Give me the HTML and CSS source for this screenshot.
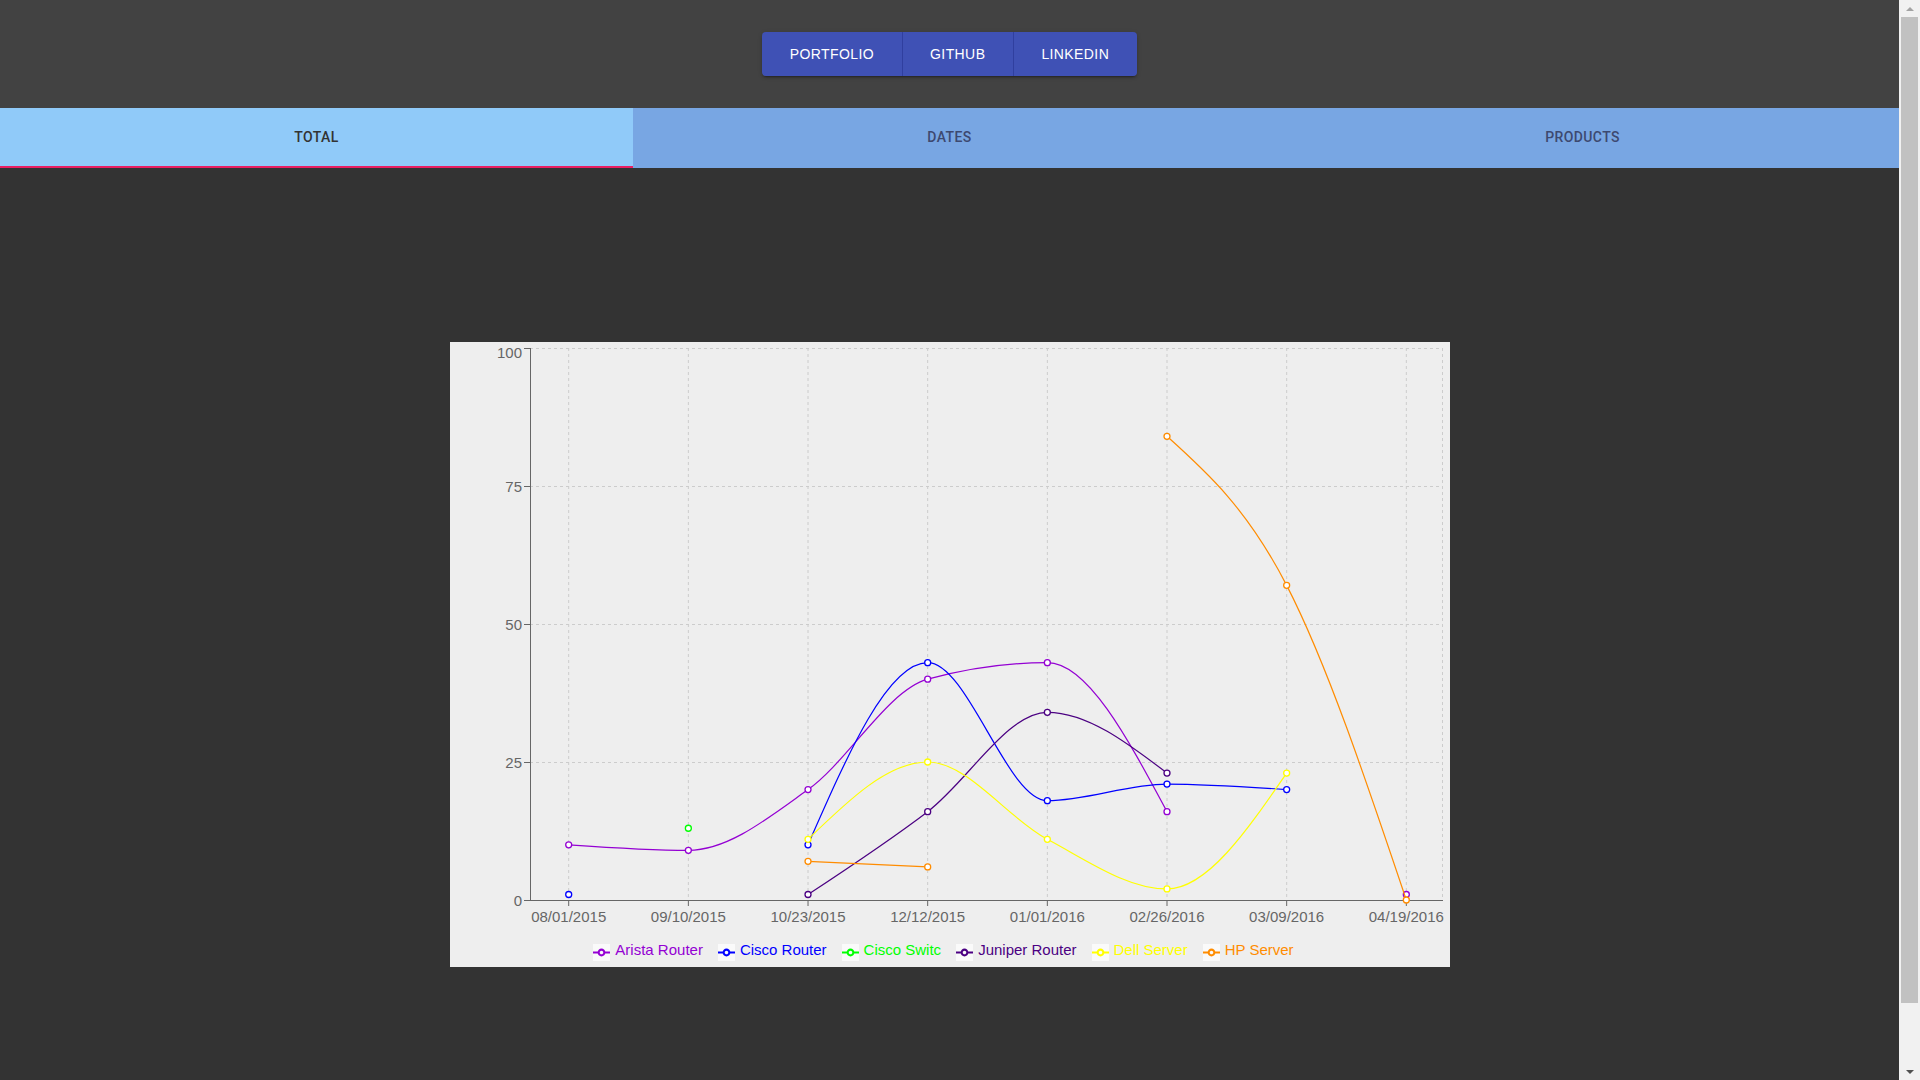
FILE: index.html
```html
<!DOCTYPE html>
<html lang="en">
<head>
<meta charset="utf-8">
<title>Sales Dashboard</title>
<link rel="stylesheet" href="styles.css">
</head>
<body>
<div class="page">
  <div class="content">
    <header class="top-bar">
      <nav class="btn-group">
        <a class="btn" href="#">PORTFOLIO</a>
        <a class="btn" href="#">GITHUB</a>
        <a class="btn" href="#">LINKEDIN</a>
      </nav>
    </header>
    <div class="tabs">
      <div class="tab active">TOTAL</div>
      <div class="tab">DATES</div>
      <div class="tab">PRODUCTS</div>
    </div>
    <main class="main">
      <div class="chart-card">
        <svg class="chart" width="1000" height="598" viewBox="0 0 1000 598">
          <g class="grid">
            <line x1="80" y1="6.5" x2="993" y2="6.5"/>
            <line x1="80" y1="144.5" x2="993" y2="144.5"/>
            <line x1="80" y1="282.5" x2="993" y2="282.5"/>
            <line x1="80" y1="420.5" x2="993" y2="420.5"/>
            <line x1="118.7" y1="6" x2="118.7" y2="558"/>
            <line x1="238.36" y1="6" x2="238.36" y2="558"/>
            <line x1="358.02" y1="6" x2="358.02" y2="558"/>
            <line x1="477.68" y1="6" x2="477.68" y2="558"/>
            <line x1="597.34" y1="6" x2="597.34" y2="558"/>
            <line x1="717" y1="6" x2="717" y2="558"/>
            <line x1="836.66" y1="6" x2="836.66" y2="558"/>
            <line x1="956.32" y1="6" x2="956.32" y2="558"/>
            <line x1="992.5" y1="6" x2="992.5" y2="558"/>
          </g>
          <g class="axis">
            <line x1="80.5" y1="6" x2="80.5" y2="558.5"/>
            <line x1="74" y1="6.5" x2="80" y2="6.5"/>
            <line x1="74" y1="144.5" x2="80" y2="144.5"/>
            <line x1="74" y1="282.5" x2="80" y2="282.5"/>
            <line x1="74" y1="420.5" x2="80" y2="420.5"/>
            <line x1="74" y1="558.5" x2="80" y2="558.5"/>
            <line x1="80" y1="558.5" x2="993" y2="558.5"/>
            <line x1="118.7" y1="558" x2="118.7" y2="564"/>
            <line x1="238.36" y1="558" x2="238.36" y2="564"/>
            <line x1="358.02" y1="558" x2="358.02" y2="564"/>
            <line x1="477.68" y1="558" x2="477.68" y2="564"/>
            <line x1="597.34" y1="558" x2="597.34" y2="564"/>
            <line x1="717" y1="558" x2="717" y2="564"/>
            <line x1="836.66" y1="558" x2="836.66" y2="564"/>
            <line x1="956.32" y1="558" x2="956.32" y2="564"/>
          </g>
          <g class="ylabels">
            <text x="72" y="15.5">100</text>
            <text x="72" y="149.5">75</text>
            <text x="72" y="287.5">50</text>
            <text x="72" y="425.5">25</text>
            <text x="72" y="564">0</text>
          </g>
          <g class="xlabels">
            <text x="118.7" y="580">08/01/2015</text>
            <text x="238.36" y="580">09/10/2015</text>
            <text x="358.02" y="580">10/23/2015</text>
            <text x="477.68" y="580">12/12/2015</text>
            <text x="597.34" y="580">01/01/2016</text>
            <text x="717" y="580">02/26/2016</text>
            <text x="836.66" y="580">03/09/2016</text>
            <text x="956.32" y="580">04/19/2016</text>
          </g>

          <g class="series s-arista">
            <path d="M118.7,502.8 C158.59,505.56 198.47,508.32 238.36,508.32 C278.25,508.32 318.13,476.12 358.02,447.6 C397.91,419.08 437.79,348.24 477.68,337.2 C517.57,326.16 557.45,320.64 597.34,320.64 C637.23,320.64 677.11,395.16 717,469.68"/>
            <circle cx="118.7" cy="502.8" r="3"/>
            <circle cx="238.36" cy="508.32" r="3"/>
            <circle cx="358.02" cy="447.6" r="3"/>
            <circle cx="477.68" cy="337.2" r="3"/>
            <circle cx="597.34" cy="320.64" r="3"/>
            <circle cx="717" cy="469.68" r="3"/>
            <circle cx="956.32" cy="552.48" r="3"/>
          </g>
          <g class="series s-cisco">
            <path d="M358.02,502.8 C397.91,411.72 437.79,320.64 477.68,320.64 C517.57,320.64 557.45,458.64 597.34,458.64 C637.23,458.64 677.11,442.08 717,442.08 C756.89,442.08 796.77,444.84 836.66,447.6"/>
            <circle cx="118.7" cy="552.48" r="3"/>
            <circle cx="358.02" cy="502.8" r="3"/>
            <circle cx="477.68" cy="320.64" r="3"/>
            <circle cx="597.34" cy="458.64" r="3"/>
            <circle cx="717" cy="442.08" r="3"/>
            <circle cx="836.66" cy="447.6" r="3"/>
          </g>
          <g class="series s-switch">
            <circle cx="238.36" cy="486.24" r="3"/>
          </g>
          <g class="series s-juniper">
            <path d="M358.02,552.48 C397.91,526.26 437.79,500.04 477.68,469.68 C517.57,439.32 557.45,370.32 597.34,370.32 C637.23,370.32 677.11,400.68 717,431.04"/>
            <circle cx="358.02" cy="552.48" r="3"/>
            <circle cx="477.68" cy="469.68" r="3"/>
            <circle cx="597.34" cy="370.32" r="3"/>
            <circle cx="717" cy="431.04" r="3"/>
          </g>
          <g class="series s-dell">
            <path d="M358.02,497.28 C397.91,458.64 437.79,420 477.68,420 C517.57,420 557.45,476.12 597.34,497.28 C637.23,518.44 677.11,546.96 717,546.96 C756.89,546.96 796.77,489 836.66,431.04"/>
            <circle cx="358.02" cy="497.28" r="3"/>
            <circle cx="477.68" cy="420" r="3"/>
            <circle cx="597.34" cy="497.28" r="3"/>
            <circle cx="717" cy="546.96" r="3"/>
            <circle cx="836.66" cy="431.04" r="3"/>
          </g>
          <g class="series s-hp">
            <path d="M358.02,519.36 L477.68,524.88"/>
            <path d="M717,94.32 C756.89,130.2 796.77,166.08 836.66,243.36 C876.55,320.64 916.43,439.32 956.32,558"/>
            <circle cx="358.02" cy="519.36" r="3"/>
            <circle cx="477.68" cy="524.88" r="3"/>
            <circle cx="717" cy="94.32" r="3"/>
            <circle cx="836.66" cy="243.36" r="3"/>
            <circle cx="956.32" cy="558" r="3"/>
          </g>
        </svg>
        <ul class="legend">
          <li class="legend-item c-arista"><svg class="legend-icon" viewBox="0 0 32 32"><path d="M0,16h10.67A5.33,5.33,0,1,1,21.33,16H32M21.33,16A5.33,5.33,0,1,1,10.67,16"/></svg><span>Arista Router</span></li>
          <li class="legend-item c-cisco"><svg class="legend-icon" viewBox="0 0 32 32"><path d="M0,16h10.67A5.33,5.33,0,1,1,21.33,16H32M21.33,16A5.33,5.33,0,1,1,10.67,16"/></svg><span>Cisco Router</span></li>
          <li class="legend-item c-switch"><svg class="legend-icon" viewBox="0 0 32 32"><path d="M0,16h10.67A5.33,5.33,0,1,1,21.33,16H32M21.33,16A5.33,5.33,0,1,1,10.67,16"/></svg><span>Cisco Switc</span></li>
          <li class="legend-item c-juniper"><svg class="legend-icon" viewBox="0 0 32 32"><path d="M0,16h10.67A5.33,5.33,0,1,1,21.33,16H32M21.33,16A5.33,5.33,0,1,1,10.67,16"/></svg><span>Juniper Router</span></li>
          <li class="legend-item c-dell"><svg class="legend-icon" viewBox="0 0 32 32"><path d="M0,16h10.67A5.33,5.33,0,1,1,21.33,16H32M21.33,16A5.33,5.33,0,1,1,10.67,16"/></svg><span>Dell Server</span></li>
          <li class="legend-item c-hp"><svg class="legend-icon" viewBox="0 0 32 32"><path d="M0,16h10.67A5.33,5.33,0,1,1,21.33,16H32M21.33,16A5.33,5.33,0,1,1,10.67,16"/></svg><span>HP Server</span></li>
        </ul>
      </div>
    </main>
  </div>
  <div class="scrollbar">
    <div class="sb-arrow sb-up"></div>
    <div class="sb-thumb"></div>
    <div class="sb-track"></div>
    <div class="sb-arrow sb-down"></div>
  </div>
</div>
</body>
</html>
```

FILE: styles.css
```css
html, body {
  margin: 0;
  padding: 0;
  height: 100%;
  overflow: hidden;
  background: #333333;
  font-family: "Liberation Sans", Arial, sans-serif;
}

.page {
  display: flex;
  height: 100vh;
}

.content {
  flex: 1;
  min-width: 0;
  background: #333333;
}

/* Header with button group */
.top-bar {
  background: #424242;
  padding: 32px 0;
  display: flex;
  justify-content: center;
}

.btn-group {
  display: flex;
  border-radius: 4px;
  overflow: hidden;
  box-shadow: 0 3px 1px -2px rgba(0, 0, 0, 0.2), 0 2px 2px 0 rgba(0, 0, 0, 0.14), 0 1px 5px 0 rgba(0, 0, 0, 0.12);
}

.btn {
  height: 44px;
  padding: 0 27.5px;
  display: flex;
  align-items: center;
  background: #3f51b5;
  color: #ffffff;
  font-family: "Liberation Sans", Arial, sans-serif;
  font-size: 14px;
  letter-spacing: 0.4px;
  text-decoration: none;
}

.btn + .btn {
  border-left: 1px solid #303f9f;
}

/* Tabs */
.tabs {
  display: flex;
}

.tab {
  flex: 1;
  height: 60px;
  box-sizing: border-box;
  border-bottom: 2px solid transparent;
  display: flex;
  align-items: center;
  justify-content: center;
  background: #78a6e3;
  color: #3d4970;
  font-family: Roboto, "Liberation Sans", sans-serif;
  font-weight: 500;
  font-size: 14px;
  letter-spacing: 0.4px;
}

.tab.active {
  background: #90caf9;
  color: #333333;
  border-bottom-color: #e91e63;
}

/* Main area */
.main {
  padding-top: 174px;
  display: flex;
  justify-content: center;
}

.chart-card {
  width: 1000px;
  height: 625px;
  background: #eeeeee;
  display: flex;
  flex-direction: column;
}

.chart {
  display: block;
  font-family: "Liberation Sans", Arial, sans-serif;
  font-size: 15px;
}

.grid line {
  stroke: #cccccc;
  stroke-width: 1;
  stroke-dasharray: 3 3;
}

.axis line {
  stroke: #666666;
  stroke-width: 1;
}

.ylabels text {
  fill: #666666;
  text-anchor: end;
}

.xlabels text {
  fill: #666666;
  text-anchor: middle;
}

.series path {
  fill: none;
  stroke-width: 1.2;
}

.series circle {
  fill: #ffffff;
  stroke-width: 1.3;
}

.s-arista path, .s-arista circle { stroke: #9400d3; }
.s-cisco path, .s-cisco circle { stroke: #0000ff; }
.s-switch path, .s-switch circle { stroke: #00ff00; }
.s-juniper path, .s-juniper circle { stroke: #4b0082; }
.s-dell path, .s-dell circle { stroke: #ffff00; }
.s-hp path, .s-hp circle { stroke: #ff8c00; }

/* Legend */
.legend {
  list-style: none;
  margin: 0;
  padding: 0 12px 0 0;
  height: 22px;
  display: flex;
  justify-content: center;
  align-items: center;
  gap: 15px;
}

.legend-item {
  display: flex;
  align-items: center;
  font-size: 15px;
  line-height: 17px;
}

.legend-icon {
  width: 17px;
  height: 17px;
  margin-right: 5px;
  background: #fafafa;
  margin-top: 2px;
}

.legend-icon path {
  fill: none;
  stroke-width: 4;
}

.legend-item span {
  position: relative;
  top: -2px;
}

.c-arista { color: #9400d3; }
.c-arista path { stroke: #9400d3; }
.c-cisco { color: #0000ff; }
.c-cisco path { stroke: #0000ff; }
.c-switch { color: #00ff00; }
.c-switch path { stroke: #00ff00; }
.c-juniper { color: #4b0082; }
.c-juniper path { stroke: #4b0082; }
.c-dell { color: #ffff00; }
.c-dell path { stroke: #ffff00; }
.c-hp { color: #ff8c00; }
.c-hp path { stroke: #ff8c00; }

/* Scrollbar look-alike */
.scrollbar {
  width: 21px;
  flex: none;
  background: #f1f1f1;
  display: flex;
  flex-direction: column;
  align-items: center;
}

.sb-arrow {
  height: 17px;
  width: 100%;
  display: flex;
  justify-content: center;
  align-items: center;
  flex: none;
}

.sb-up::before {
  content: "";
  border-left: 4px solid transparent;
  border-right: 4px solid transparent;
  border-bottom: 4px solid #a3a3a3;
}

.sb-down::before {
  content: "";
  border-left: 4px solid transparent;
  border-right: 4px solid transparent;
  border-top: 4px solid #505050;
}

.sb-thumb {
  width: 17px;
  height: 986px;
  background: #c1c1c1;
  flex: none;
}

.sb-track {
  flex: 1;
}
```
